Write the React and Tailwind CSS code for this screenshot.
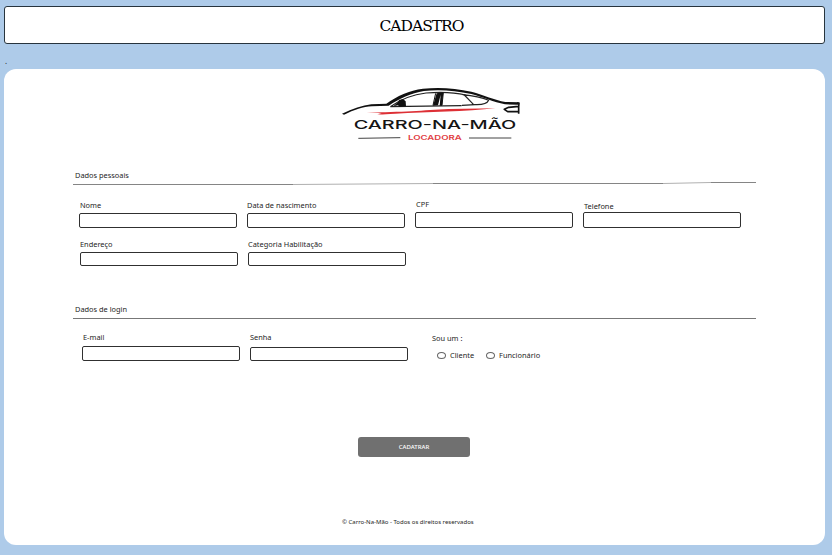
import React from "react";

function Logo() {
  return (
    <svg className="mt-[11px] ml-[328px] block h-[68px] w-[196px] shrink-0" viewBox="0 0 588 204" role="img" aria-label="Carro-na-mão Locadora">
      <path d="M30 101C62 86 91 76 118 73L163 71C195 48 232 31 273 26C320 21 370 24 418 35C456 45 487 60 520 66L560 67L558 74L519 73C484 66 455 52 418 42C369 31 318 28 276 33C236 39 203 56 170 77L120 79C93 80 67 90 36 104Z" fill="#111" />
      <path d="M175 80C207 57 239 44 282 39C328 35 367 37 401 45M175 80L389 77" fill="none" stroke="#222" strokeWidth="3.5" />
      <path d="M184 79L199 65L201 60L213 57L221 64L222 79L203 81L198 76Z" fill="#111" />
      <path d="M314 40L334 37L330 77L323 77L326 44L318 76L303 77Z" fill="#111" />
      <path d="M311 40L303 76M334 38L330 76" fill="none" stroke="#111" strokeWidth="3" />
      <path d="M392 44C423 47 451 53 470 61C466 70 454 75 429 74L390 76M397 45L425 74" fill="none" stroke="#222" strokeWidth="3.5" strokeLinejoin="round" />
      <path d="M555 69H561L560 80V101M560 79L530 82L517 88L527 95L560 95" fill="none" stroke="#111" strokeWidth="5" strokeLinejoin="round" />
      <path d="M104 97C210 97 275 91 350 87L490 85C405 94 285 97 190 101C160 103 143 104 136 103L149 99Z" fill="#dd3036" />
      <text x="65" y="147" textLength="488" lengthAdjust="spacingAndGlyphs" fontSize="36" fontWeight="500" fill="#151515" className="font-['Inter',sans-serif]">CARRO-NA-MÃO</text>
      <text x="228" y="180" textLength="161" lengthAdjust="spacingAndGlyphs" fontSize="18" fontWeight="600" fill="#df3b40" className="font-['Inter',sans-serif]">LOCADORA</text>
      <path d="M79 175L205 173M411 174H538" stroke="#444" strokeWidth="3" />
    </svg>
  );
}

function Field({ label, type = "text", labelClass, inputClass }) {
  return (
    <label className="block w-[158px]">
      <span className={`block leading-[10px] ${labelClass}`}>{label}</span>
      <input type={type} className={`block w-full rounded-[2px] border border-[#303030] bg-white outline-none ${inputClass}`} />
    </label>
  );
}

function Option({ label }) {
  return (
    <label className="flex items-center gap-[4px]">
      <input type="radio" name="perfil" className="h-[7px] w-[9px] appearance-none rounded-[50%] border border-[#666] bg-white" />
      <span className="leading-[10px]">{label}</span>
    </label>
  );
}

export default function App() {
  return (
    <div className="flex h-[555px] w-full flex-col overflow-hidden bg-[#aecbe9] pt-[6px] pr-[7px] pl-[4px] font-['Noto_Sans',sans-serif] text-[7.4px] text-[#252525]">
      <header className="flex h-[38px] shrink-0 items-center justify-center rounded-[3px] border border-[#27343d] bg-white pt-[3px] pl-[14px]">
        <h1 className="font-['DejaVu_Serif',serif] text-[15.5px] tracking-[-1px] text-black">CADASTRO</h1>
      </header>
      <div className="h-[25px] shrink-0 pt-[12px] pl-[1px] text-[8px] leading-[10px]">.</div>

      <main className="flex h-[476px] shrink-0 flex-col rounded-[12px] bg-white">
        <Logo />

        <section className="mt-[21px] ml-[69px] w-[683px]">
          <h2 className="pl-[2px] leading-[12px]">Dados pessoais</h2>
          <svg className="mt-[1px] block h-[4px] w-[683px]" viewBox="0 0 683 4">
            <path d="M0 2.5H220M360 1.5H590M638 0.5H683" stroke="#858585" />
            <path d="M220 2.5L360 1.5M590 1.5L638 0.5" stroke="#b0b0b0" />
          </svg>
          <div className="mt-[13px] flex gap-[10px] pl-[6px]">
            <Field label="Nome" labelClass="pl-[1px] pt-[1px]" inputClass="mt-[3px] h-[15px]" />
            <Field label="Data de nascimento" labelClass="pt-[1px]" inputClass="mt-[3px] h-[15px]" />
            <Field label="CPF" labelClass="pl-[1px]" inputClass="mt-[3px] h-[16px]" />
            <Field label="Telefone" labelClass="pl-[1px] pt-[2px]" inputClass="mt-[1px] h-[16px]" />
          </div>
          <div className="mt-[11px] flex gap-[10px] pl-[7px]">
            <Field label="Endereço" labelClass="" inputClass="mt-[3px] h-[14px]" />
            <Field label="Categoria Habilitação" labelClass="" inputClass="mt-[3px] h-[14px]" />
          </div>
        </section>

        <section className="mt-[37px] ml-[69px] w-[683px]">
          <h2 className="border-b border-[#777] pb-[3px] pl-[2px] leading-[12px]">Dados de login</h2>
          <div className="mt-[13px] flex pl-[9px]">
            <Field label="E-mail" labelClass="pl-[1px]" inputClass="mt-[4px] h-[15px]" type="email" />
            <div className="ml-[10px]">
              <Field label="Senha" labelClass="" inputClass="mt-[5px] h-[14px]" type="password" />
            </div>
            <fieldset className="ml-[24px] pt-[1px]">
              <legend className="pt-[1px] leading-[11px]">Sou um :</legend>
              <div className="mt-[5px] flex gap-[12px] pl-[5px]">
                <Option label="Cliente" />
                <Option label="Funcionário" />
              </div>
            </fieldset>
          </div>
        </section>

        <button className="mt-[76px] ml-[354px] h-[20px] w-[112px] shrink-0 rounded-[3px] bg-[#707070] text-[6px] font-medium text-white">CADATRAR</button>
        <footer className="mt-[60px] ml-[338px] text-[6px] leading-[11px] whitespace-nowrap">© Carro-Na-Mão - Todos os direitos reservados</footer>
      </main>
    </div>
  );
}
